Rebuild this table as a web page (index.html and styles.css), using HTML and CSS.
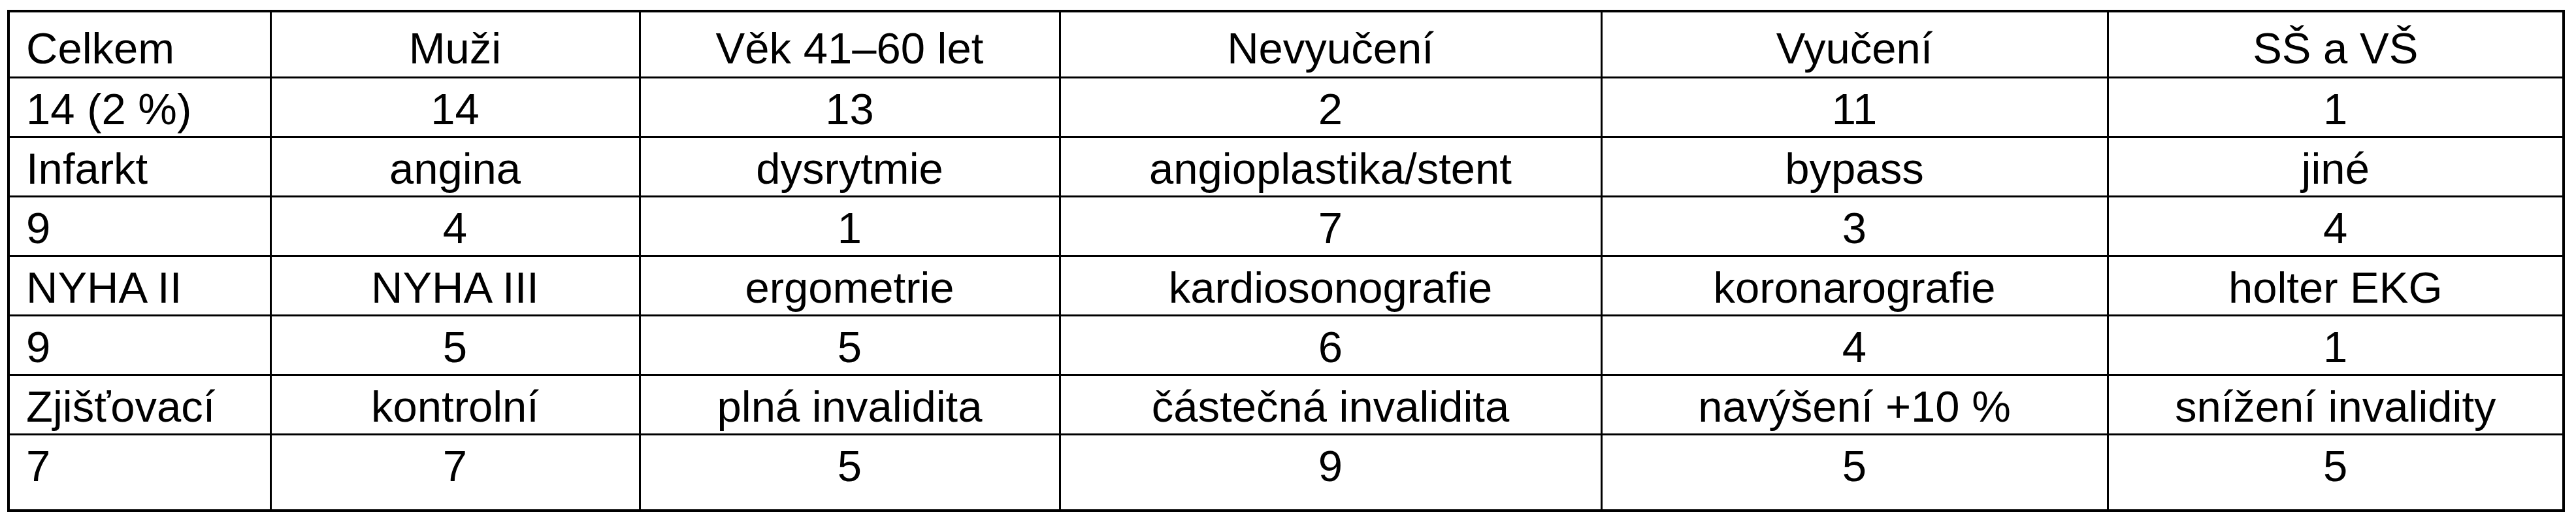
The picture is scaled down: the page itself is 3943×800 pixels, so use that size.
FILE: index.html
```html
<!DOCTYPE html>
<html lang="cs">
<head>
<meta charset="utf-8">
<link rel="stylesheet" href="styles.css">
</head>
<body>
<table class="data">
  <colgroup>
    <col class="c1"><col class="c2"><col class="c3"><col class="c4"><col class="c5"><col class="c6">
  </colgroup>
  <tbody>
    <tr class="first"><td>Celkem</td><td>Muži</td><td>Věk 41–60 let</td><td>Nevyučení</td><td>Vyučení</td><td>SŠ a VŠ</td></tr>
    <tr><td>14 (2 %)</td><td>14</td><td>13</td><td>2</td><td>11</td><td>1</td></tr>
    <tr><td>Infarkt</td><td>angina</td><td>dysrytmie</td><td>angioplastika/stent</td><td>bypass</td><td>jiné</td></tr>
    <tr><td>9</td><td>4</td><td>1</td><td>7</td><td>3</td><td>4</td></tr>
    <tr><td>NYHA II</td><td>NYHA III</td><td>ergometrie</td><td>kardiosonografie</td><td>koronarografie</td><td>holter EKG</td></tr>
    <tr><td>9</td><td>5</td><td>5</td><td>6</td><td>4</td><td>1</td></tr>
    <tr><td>Zjišťovací</td><td>kontrolní</td><td>plná invalidita</td><td>částečná invalidita</td><td>navýšení +10 %</td><td>snížení invalidity</td></tr>
    <tr class="last"><td>7</td><td>7</td><td>5</td><td>9</td><td>5</td><td>5</td></tr>
  </tbody>
</table>
</body>
</html>
```

FILE: styles.css
```css
html, body {
  margin: 0;
  padding: 0;
  background: #fff;
}

body {
  padding: 15px 0 0 11px;
  font-family: "Liberation Sans", Arial, sans-serif;
  color: #000;
}

.data {
  border-collapse: collapse;
  table-layout: fixed;
  width: 3911px;
  border: 4px solid #000;
}

.c1 { width: 401px; }
.c2 { width: 565px; }
.c3 { width: 643px; }
.c4 { width: 829px; }
.c5 { width: 775px; }
.c6 { width: 698px; }

.data td {
  border: 3px solid #000;
  font-size: 67px;
  line-height: 76px;
  height: 91px;
  box-sizing: border-box;
  padding: 9px 0 0 0;
  vertical-align: top;
  text-align: center;
  white-space: nowrap;
}

.data td:first-child {
  text-align: left;
  padding-left: 25px;
}

.data tr.first td {
  height: 101px;
  padding-top: 17px;
}

.data tr.last td {
  height: 117px;
}
```
